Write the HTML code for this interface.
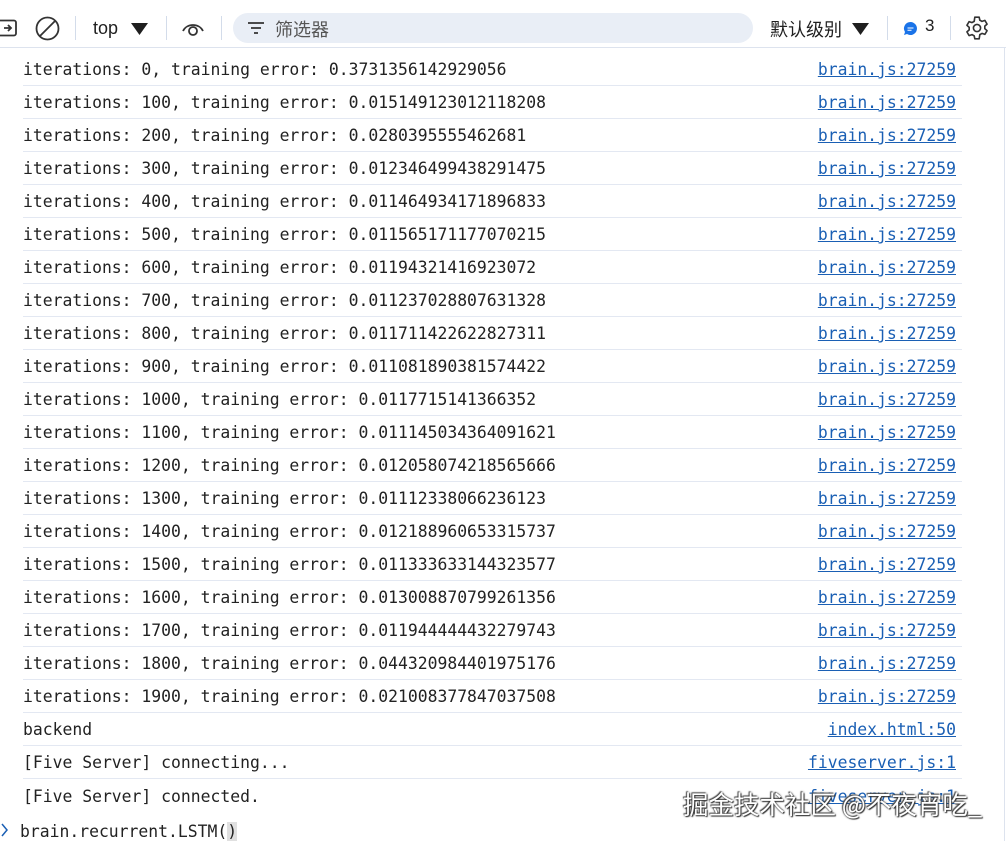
<!DOCTYPE html>
<html><head><meta charset="utf-8"><style>
*{margin:0;padding:0;box-sizing:border-box}
body{width:1006px;height:841px;background:#fff;position:relative;overflow:hidden;font-family:"Liberation Sans","Noto Sans CJK SC",sans-serif;color:#1f1f1f}
.tb{position:absolute;left:0;top:0;width:1006px;height:48px;border-bottom:1px solid #dde3ee;background:#fff}
.sep{position:absolute;top:16px;width:1px;height:24px;background:#d3dcea}
.row{position:absolute;left:23px;width:939px;height:33px;border-bottom:1px solid #e3e8f2;font-family:"DejaVu Sans Mono",monospace;font-size:16.4px;line-height:34px;white-space:pre;color:#222}
.row a{position:absolute;right:6px;top:0;color:#1a5fb4;text-decoration:underline}
.wm{position:absolute;left:683px;top:785px;font-family:"Noto Sans CJK SC",sans-serif;font-size:25.5px;color:#fff;text-shadow:0 0 2px #333,1px 1px 1px #333,-1px -1px 1px #555;white-space:nowrap}
</style></head><body>
<div style="position:absolute;left:112px;top:0;width:1px;height:7px;background:#ccc"></div>
<div style="position:absolute;left:322px;top:0;width:126px;height:6px;background:#f1f3f6;border-radius:0 0 4px 4px"></div>
<div style="position:absolute;left:869px;top:0;width:1px;height:8px;background:#ccc"></div>
<div class="tb">
<svg style="position:absolute;left:0;top:19px" width="18" height="18" viewBox="0 0 18 18"><rect x="-6" y="1.5" width="22" height="15" rx="2" fill="none" stroke="#333" stroke-width="1.8"/><path d="M4 9h7M8 6l3 3-3 3" fill="none" stroke="#333" stroke-width="1.8"/></svg>
<svg style="position:absolute;left:35px;top:16px" width="25" height="25" viewBox="0 0 25 25"><circle cx="12.5" cy="12.5" r="11" fill="none" stroke="#333" stroke-width="1.8"/><path d="M5 20L20 5" stroke="#333" stroke-width="1.8"/></svg>
<div class="sep" style="left:75px"></div>
<div style="position:absolute;left:93px;top:18px;font-size:18px">top</div>
<svg style="position:absolute;left:131px;top:23px" width="17" height="12"><path d="M0 0h17L8.5 12z" fill="#1f1f1f"/></svg>
<div class="sep" style="left:166px"></div>
<svg style="position:absolute;left:181px;top:20px" width="24" height="16" viewBox="0 0 24 16"><path d="M2 11C6 3 18 3 22 11" fill="none" stroke="#333" stroke-width="1.8"/><circle cx="12" cy="11" r="4" fill="none" stroke="#333" stroke-width="1.8"/></svg>
<div class="sep" style="left:221px"></div>
<div style="position:absolute;left:233px;top:13px;width:520px;height:30px;border-radius:15px;background:#e9eef6"></div>
<svg style="position:absolute;left:248px;top:21px" width="16" height="14"><path d="M0 2h16M3 7h10M6 12h4" stroke="#333" stroke-width="1.8"/></svg>
<div style="position:absolute;left:275px;top:16px;font-size:18px;color:#555">筛选器</div>
<div style="position:absolute;left:770px;top:16px;font-size:18px">默认级别</div>
<svg style="position:absolute;left:852px;top:23px" width="17" height="12"><path d="M0 0h17L8.5 12z" fill="#1f1f1f"/></svg>
<div class="sep" style="left:887px"></div>
<svg style="position:absolute;left:903px;top:21px" width="15" height="15" viewBox="0 0 15 15"><path d="M7.5 1a6.5 6.5 0 1 1-3.5 12L1 14l1-3A6.5 6.5 0 0 1 7.5 1z" fill="#1a73e8"/><path d="M4.5 7h6M4.5 9.3h4" stroke="#fff" stroke-width="1"/></svg>
<div style="position:absolute;left:925px;top:16px;font-size:17px">3</div>
<div class="sep" style="left:950px"></div>
<svg style="position:absolute;left:964px;top:15px" width="26" height="26" viewBox="0 0 24 24"><path d="M10 2h4l.6 2.8 2 1.1 2.7-.9 2 3.4-2.1 1.9v2.3l2.1 1.9-2 3.4-2.7-.9-2 1.1L14 22h-4l-.6-2.8-2-1.1-2.7.9-2-3.4 2.1-1.900v-2.3L2.7 9.5l2-3.4 2.7.9 2-1.1z" fill="none" stroke="#333" stroke-width="1.5" stroke-linejoin="round"/><circle cx="12" cy="12" r="3.3" fill="none" stroke="#333" stroke-width="1.5"/></svg>
</div>
<div style="position:absolute;left:1004px;top:48px;width:1px;height:793px;background:#dde3ee"></div>

<div class="row" style="top:53px">iterations: 0, training error: 0.3731356142929056<a>brain.js:27259</a></div>
<div class="row" style="top:86px">iterations: 100, training error: 0.015149123012118208<a>brain.js:27259</a></div>
<div class="row" style="top:119px">iterations: 200, training error: 0.0280395555462681<a>brain.js:27259</a></div>
<div class="row" style="top:152px">iterations: 300, training error: 0.012346499438291475<a>brain.js:27259</a></div>
<div class="row" style="top:185px">iterations: 400, training error: 0.011464934171896833<a>brain.js:27259</a></div>
<div class="row" style="top:218px">iterations: 500, training error: 0.011565171177070215<a>brain.js:27259</a></div>
<div class="row" style="top:251px">iterations: 600, training error: 0.01194321416923072<a>brain.js:27259</a></div>
<div class="row" style="top:284px">iterations: 700, training error: 0.011237028807631328<a>brain.js:27259</a></div>
<div class="row" style="top:317px">iterations: 800, training error: 0.011711422622827311<a>brain.js:27259</a></div>
<div class="row" style="top:350px">iterations: 900, training error: 0.011081890381574422<a>brain.js:27259</a></div>
<div class="row" style="top:383px">iterations: 1000, training error: 0.0117715141366352<a>brain.js:27259</a></div>
<div class="row" style="top:416px">iterations: 1100, training error: 0.011145034364091621<a>brain.js:27259</a></div>
<div class="row" style="top:449px">iterations: 1200, training error: 0.012058074218565666<a>brain.js:27259</a></div>
<div class="row" style="top:482px">iterations: 1300, training error: 0.01112338066236123<a>brain.js:27259</a></div>
<div class="row" style="top:515px">iterations: 1400, training error: 0.012188960653315737<a>brain.js:27259</a></div>
<div class="row" style="top:548px">iterations: 1500, training error: 0.011333633144323577<a>brain.js:27259</a></div>
<div class="row" style="top:581px">iterations: 1600, training error: 0.013008870799261356<a>brain.js:27259</a></div>
<div class="row" style="top:614px">iterations: 1700, training error: 0.011944444432279743<a>brain.js:27259</a></div>
<div class="row" style="top:647px">iterations: 1800, training error: 0.044320984401975176<a>brain.js:27259</a></div>
<div class="row" style="top:680px">iterations: 1900, training error: 0.021008377847037508<a>brain.js:27259</a></div>
<div class="row" style="top:713px">backend<a>index.html:50</a></div>
<div class="row" style="top:746px">[Five Server] connecting...<a>fiveserver.js:1</a></div>
<div class="row" style="top:780px;border-bottom:none">[Five Server] connected.<a>fiveserver.js:1</a></div>
<svg style="position:absolute;left:1px;top:823px" width="8" height="14"><path d="M1 1l5 6-5 6" fill="none" stroke="#1a5fb4" stroke-width="1.5"/></svg>
<div style="position:absolute;left:20px;top:817px;font-family:'DejaVu Sans Mono',monospace;font-size:16.4px;line-height:30px;white-space:pre;color:#222">brain.recurrent.LSTM(<span style="background:#e0e0e0">)</span></div>
<div class="wm">掘金技术社区 @不夜宵吃_</div>
</body></html>
